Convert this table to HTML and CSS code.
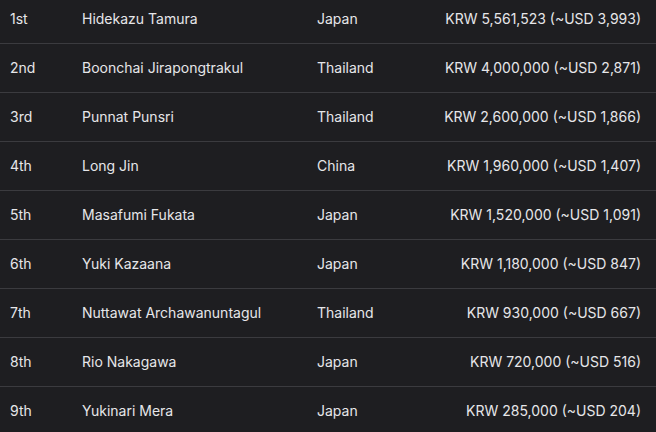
FILE: index.html
```html
<!DOCTYPE html>
<html>
<head>
<meta charset="utf-8">
<link rel="stylesheet" href="styles.css">
</head>
<body>
<table class="prizes">
<tbody>
<tr><td class="rank">1st</td><td class="name">Hidekazu Tamura</td><td class="country">Japan</td><td class="amount">KRW 5,561,523 (~USD 3,993)</td></tr>
<tr><td class="rank">2nd</td><td class="name">Boonchai Jirapongtrakul</td><td class="country">Thailand</td><td class="amount">KRW 4,000,000 (~USD 2,871)</td></tr>
<tr><td class="rank">3rd</td><td class="name">Punnat Punsri</td><td class="country">Thailand</td><td class="amount">KRW 2,600,000 (~USD 1,866)</td></tr>
<tr><td class="rank">4th</td><td class="name">Long Jin</td><td class="country">China</td><td class="amount">KRW 1,960,000 (~USD 1,407)</td></tr>
<tr><td class="rank">5th</td><td class="name">Masafumi Fukata</td><td class="country">Japan</td><td class="amount">KRW 1,520,000 (~USD 1,091)</td></tr>
<tr><td class="rank">6th</td><td class="name">Yuki Kazaana</td><td class="country">Japan</td><td class="amount">KRW 1,180,000 (~USD 847)</td></tr>
<tr><td class="rank">7th</td><td class="name">Nuttawat Archawanuntagul</td><td class="country">Thailand</td><td class="amount">KRW 930,000 (~USD 667)</td></tr>
<tr><td class="rank">8th</td><td class="name">Rio Nakagawa</td><td class="country">Japan</td><td class="amount">KRW 720,000 (~USD 516)</td></tr>
<tr><td class="rank">9th</td><td class="name">Yukinari Mera</td><td class="country">Japan</td><td class="amount">KRW 285,000 (~USD 204)</td></tr>
</tbody>
</table>
</body>
</html>
```
FILE: styles.css
```css
html, body {
  margin: 0;
  padding: 0;
  background: #1e1e21;
  overflow: hidden;
}
body {
  font-family: Inter, "Noto Sans", sans-serif;
  font-size: 14px;
  color: #e6e6e9;
}
.prizes {
  width: 100%;
  border-collapse: collapse;
  margin-top: -6px;
}
.prizes tr {
  height: 49px;
  border-bottom: 1px solid #3b3b3f;
}
.prizes td {
  padding: 0;
  vertical-align: middle;
  white-space: nowrap;
}
.rank {
  width: 72px;
  padding-left: 10px !important;
}
.name {
  width: 235px;
}
.country {
  width: 120px;
}
.amount {
  text-align: right;
  padding-right: 15px !important;
}
```
